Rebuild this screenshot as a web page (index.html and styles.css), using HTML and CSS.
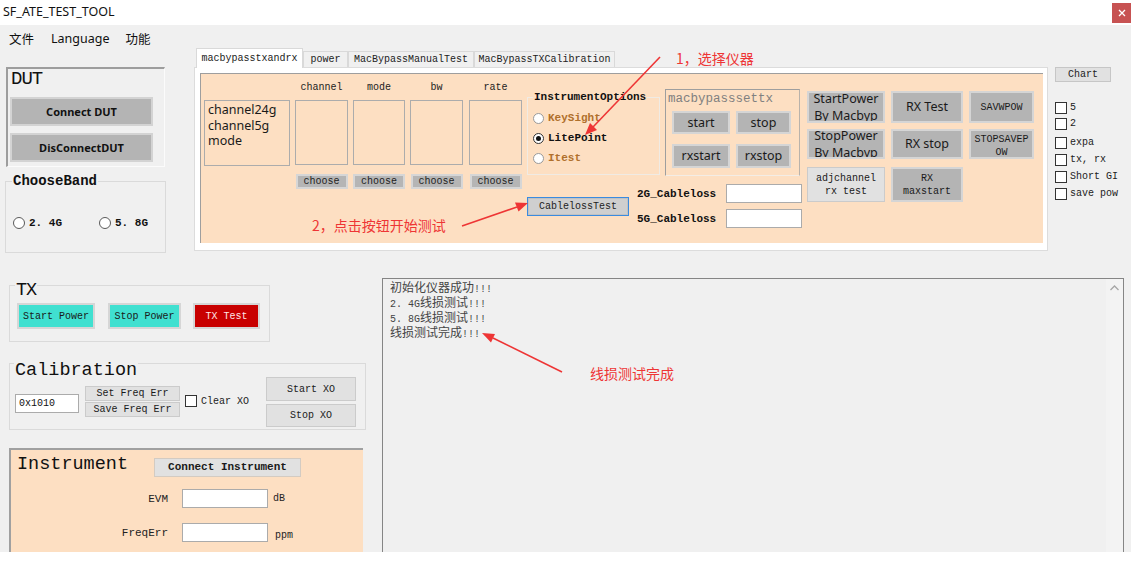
FILE: index.html
```html
<!DOCTYPE html>
<html lang="zh">
<head>
<meta charset="utf-8">
<title>SF_ATE_TEST_TOOL</title>
<link rel="stylesheet" href="styles.css">
</head>
<body>
<div class="app">
  <header class="titlebar">
    <span class="title">SF_ATE_TEST_TOOL</span>
    <span class="close"><svg width="8" height="8" viewBox="0 0 8 8"><path d="M1 1L7 7M7 1L1 7" stroke="#fff" stroke-width="1.3"/></svg></span>
  </header>
  <div class="window">
    <nav class="menubar"><span class="m1">文件</span><span class="m2">Language</span><span>功能</span></nav>
    <div class="top">
      <div class="leftcol">
        <section class="dut">
          <div class="dut-title">DUT</div>
          <div class="dut-btn first">Connect DUT</div>
          <div class="dut-btn">DisConnectDUT</div>
        </section>
        <section class="band">
          <div class="band-title">ChooseBand</div>
          <div class="band-row">
            <div class="radio-item band-item"><span class="radio"></span><span class="rlabel">2. 4G</span></div>
            <div class="radio-item"><span class="radio"></span><span class="rlabel">5. 8G</span></div>
          </div>
        </section>
      </div>
      <div class="tabs">
        <div class="tabstrip">
          <div class="tab active w1">macbypasstxandrx</div>
          <div class="tab w2">power</div>
          <div class="tab w3">MacBypassManualTest</div>
          <div class="tab w4">MacBypassTXCalibration</div>
        </div>
        <div class="tabpage">
          <div class="peach">
            <div class="lb-main">channel24g<br>channel5g<br>mode</div>
            <div class="col c53"><div class="col-label">channel</div><div class="col-box"></div><div class="choose">choose</div></div>
            <div class="col c52"><div class="col-label">mode</div><div class="col-box"></div><div class="choose">choose</div></div>
            <div class="col c53"><div class="col-label">bw</div><div class="col-box"></div><div class="choose">choose</div></div>
            <div class="col c53 last"><div class="col-label">rate</div><div class="col-box"></div><div class="choose">choose</div></div>
            <div class="fg">
              <div class="fg-top">
                <div class="instopt">
                  <div class="io-title">InstrumentOptions</div>
                  <div class="io-row first brown"><span class="radio light"></span><span class="io-label">KeySight</span></div>
                  <div class="io-row"><span class="radio checked"></span><span class="io-label">LitePoint</span></div>
                  <div class="io-row brown"><span class="radio light"></span><span class="io-label">Itest</span></div>
                </div>
                <div class="macset">
                  <div class="ms-title">macbypasssettx</div>
                  <div class="ms-grid">
                    <div class="gbtn ui">start</div>
                    <div class="gbtn ui">stop</div>
                    <div class="gbtn ui">rxstart</div>
                    <div class="gbtn ui">rxstop</div>
                  </div>
                </div>
              </div>
              <div class="fg-bottom">
                <div class="cabletest">CablelossTest</div>
                <div class="cablegrid">
                  <span class="cl-label">2G_Cableloss</span><span class="input"></span>
                  <span class="cl-label">5G_Cableloss</span><span class="input"></span>
                </div>
              </div>
            </div>
            <div class="hgrid">
              <div class="gbtn ui two">StartPower<br>By Macbyp</div>
              <div class="gbtn ui">RX Test</div>
              <div class="gbtn">SAVWPOW</div>
              <div class="gbtn ui two">StopPower<br>By Macbyp</div>
              <div class="gbtn ui">RX stop</div>
              <div class="gbtn brk">STOPSAVEPOW</div>
              <div class="lbtn r3 lines">adjchannel<br>rx test</div>
              <div class="gbtn r3 lines">RX<br>maxstart</div>
            </div>
          </div>
        </div>
      </div>
      <div class="rightcol">
        <div class="chart">Chart</div>
        <div class="cblist">
          <div class="cb h16"><span class="checkbox"></span><span>5</span></div>
          <div class="cb h19"><span class="checkbox"></span><span>2</span></div>
          <div class="cb"><span class="checkbox"></span><span>expa</span></div>
          <div class="cb"><span class="checkbox"></span><span>tx, rx</span></div>
          <div class="cb"><span class="checkbox"></span><span>Short GI</span></div>
          <div class="cb"><span class="checkbox"></span><span>save pow</span></div>
        </div>
      </div>
    </div>
    <div class="bottom">
      <div class="leftb">
        <section class="tx">
          <div class="gtitle tx-title">TX</div>
          <div class="tx-row">
            <div class="cbtn cyan wa">Start Power</div>
            <div class="cbtn cyan wb">Stop Power</div>
            <div class="cbtn red wc">TX Test</div>
          </div>
        </section>
        <section class="calib">
          <div class="gtitle cal-title">Calibration</div>
          <div class="cal-row">
            <div class="input cal-input">0x1010</div>
            <div class="freq-col">
              <div class="lbtn fbtn">Set Freq Err</div>
              <div class="lbtn fbtn">Save Freq Err</div>
            </div>
            <div class="clear-xo"><span class="checkbox"></span><span>Clear XO</span></div>
            <div class="xo-col">
              <div class="lbtn xo1">Start XO</div>
              <div class="lbtn xo2">Stop XO</div>
            </div>
          </div>
        </section>
        <section class="instr">
          <div class="instr-top">
            <div class="instr-title">Instrument</div>
            <div class="lbtn conn">Connect Instrument</div>
          </div>
          <div class="instr-row evm"><span class="ilabel">EVM</span><span class="input iin"></span><span class="unit">dB</span></div>
          <div class="instr-row ferr"><span class="ilabel">FreqErr</span><span class="input iin"></span><span class="unit ppm">ppm</span></div>
        </section>
      </div>
      <div class="log">
        <div class="log-text">
          <div>初始化仪器成功<span class="mono">!!!</span></div>
          <div><span class="mono">2. 4G</span>线损测试<span class="mono">!!!</span></div>
          <div><span class="mono">5. 8G</span>线损测试<span class="mono">!!!</span></div>
          <div>线损测试完成<span class="mono">!!!</span></div>
        </div>
        <div class="scroll"><svg width="17" height="10" viewBox="0 0 17 10"><polyline points="4.5,7 8.5,3 12.5,7" fill="none" stroke="#a6a6a6" stroke-width="1.3"/></svg></div>
      </div>
    </div>
  </div>
  <svg class="arrows" width="1136" height="563" viewBox="0 0 1136 563">
    <g fill="#ee3535" stroke="#ee3535">
      <line x1="660" y1="57" x2="593" y2="127" stroke-width="1.6"/>
      <polygon points="585,135 597,130 590,123" stroke="none"/>
      <line x1="462" y1="226" x2="517" y2="207" stroke-width="1.6"/>
      <polygon points="528,203 518.5,211.5 515,202.5" stroke="none"/>
      <line x1="562" y1="372" x2="493" y2="338" stroke-width="1.6"/>
      <polygon points="482,333 495,334 491,342.5" stroke="none"/>
    </g>
  </svg>
  <span class="note n1">1，选择仪器</span>
  <span class="note n2">2，点击按钮开始测试</span>
  <span class="note n3">线损测试完成</span>
</div>
</body>
</html>
```

FILE: styles.css
```css
* { box-sizing: border-box; margin: 0; padding: 0; }
html, body { background: #fff; }
body {
  width: 1136px; height: 563px; overflow: hidden;
  font-family: "Liberation Mono", "DejaVu Sans Mono", monospace;
  font-size: 10px; color: #1a1a1a;
}
.app { position: relative; width: 1136px; height: 563px; }
.ui { font-family: "Noto Sans", "Noto Sans CJK SC", sans-serif; }
.mono { font-family: "Liberation Mono", monospace; font-size: 10px; }

/* title bar */
.titlebar { height: 25px; display: flex; align-items: flex-start; justify-content: space-between; padding: 0 5px 0 3px; background: #fff; }
.title { font-family: "Noto Sans", "Noto Sans CJK SC", sans-serif; font-size: 12.5px; line-height: 24px; color: #111; }
.close { margin-top: 3px; width: 19px; height: 20px; background: #c75252; display: flex; align-items: center; justify-content: center; }

.window { width: 1131px; height: 527px; background: #f0f0f0; overflow: hidden; }
.menubar { height: 23px; display: flex; align-items: center; padding: 3px 0 0 9px; font-family: "Noto Sans", "Noto Sans CJK SC", sans-serif; font-size: 12.5px; color: #111; }
.menubar .m1 { margin-right: 17px; }
.menubar .m2 { margin-right: 16px; }

.top { display: flex; height: 205px; }

/* left column */
.leftcol { width: 194px; flex: none; }
.dut {
  margin: 19px 0 0 6px; width: 159px; height: 100px;
  border-top: 2px solid #9d9d9d; border-left: 2px solid #9d9d9d;
  border-right: 1px solid #fbfbfb; border-bottom: 1px solid #fbfbfb;
}
.dut-title { font-size: 19px; line-height: 20px; padding-left: 3px; letter-spacing: -1px; color: #111; }
.dut-btn {
  margin: 7px 0 0 2px; width: 143px; height: 29px;
  background: #b4b4b4; border: 2px solid #d3d3d3;
  display: flex; align-items: center; justify-content: center;
  font-family: "Noto Sans", sans-serif; font-weight: bold; font-size: 11px; color: #111;
}
.dut-btn.first { margin-top: 8px; }

.band { margin: 14px 0 0 5px; width: 161px; height: 72px; border: 1px solid #dadada; }
.band-title {
  width: fit-content; margin: -9px 0 0 6px; padding: 0 1px; background: #f0f0f0;
  font-weight: bold; font-size: 14px; line-height: 16px; color: #111;
}
.band-row { display: flex; align-items: center; margin: 27px 0 0 7px; height: 14px; }
.radio-item { display: flex; align-items: center; }
.band-item { width: 86px; }
.rlabel { margin-left: 4px; font-weight: bold; font-size: 11px; color: #111; }
.radio {
  width: 12px; height: 12px; border: 1px solid #5a5a5a; border-radius: 50%; background: #fff; flex: none;
  display: inline-flex; align-items: center; justify-content: center;
}
.radio.light { border-color: #9a9a9a; width: 11px; height: 11px; }
.radio.checked { width: 11px; height: 11px; border-color: #333; }
.radio.checked::after { content: ""; width: 5px; height: 5px; border-radius: 50%; background: #111; }

/* tabs */
.tabs { width: 854px; flex: none; }
.tabstrip { height: 19px; display: flex; align-items: flex-end; padding-left: 2px; }
.tab {
  height: 16px; line-height: 15px; text-align: center;
  border: 1px solid #d9d9d9; border-bottom: none; background: #f0f0f0; color: #222;
}
.tab.active { position: relative; z-index: 1; height: 20px; margin-bottom: -1px; line-height: 19px; background: #fff; }
.w1 { width: 107px; }
.w2 { width: 45px; }
.w3 { width: 126px; }
.w4 { width: 141px; }
.tabpage { height: 184px; background: #fff; border: 1px solid #dcdcdc; padding: 5px 4px 7px 5px; }
.peach {
  height: 170px; background: #fddfc2;
  border-top: 1px solid #9e9e9e; border-left: 1px solid #9e9e9e;
  display: flex; align-items: flex-start;
}
.lb-main {
  margin: 26px 0 0 3px; width: 86px; height: 66px; flex: none;
  border: 1px solid #acacac; padding: 1px 3px;
  font-family: "Noto Sans", sans-serif; font-size: 12.5px; line-height: 15.5px; color: #1a1a1a;
}
.col { display: flex; flex-direction: column; align-items: center; margin-left: 5px; flex: none; }
.col.last { margin-left: 6px; }
.c53 { width: 53px; }
.c52 { width: 52px; }
.col-label { height: 26px; padding-top: 8px; line-height: 12px; color: #222; }
.col-box { width: 100%; height: 65px; border: 1px solid #acacac; }
.choose {
  margin-top: 9px; width: 52px; height: 15px; line-height: 11px; text-align: center;
  background: #b5b5b5; border: 2px solid #d6d6d6; color: #222;
}

.fg { margin-left: 5px; width: 275px; flex: none; }
.fg-top { display: flex; align-items: flex-start; margin-top: 15px; height: 87px; }
.instopt { margin-top: 8px; width: 133px; height: 78px; border: 1px solid #f0ebe4; flex: none; }
.io-title {
  width: fit-content; margin: -7px 0 0 5px; padding: 0 1px; background: #fddfc2;
  font-weight: bold; font-size: 11px; line-height: 12px; color: #111;
}
.io-row { display: flex; align-items: center; height: 20px; padding-left: 5px; font-weight: bold; font-size: 11px; color: #111; }
.io-row.first { margin-top: 5px; }
.io-row.brown { color: #b0702c; }
.io-label { margin-left: 4px; }
.macset {
  margin-left: 5px; width: 135px; height: 87px; flex: none;
  border-top: 1px solid #9e9e9e; border-left: 1px solid #9e9e9e;
  border-right: 1px solid #b9b2aa; border-bottom: 1px solid #f3ede6;
}
.ms-title { margin-top: 1px; padding-left: 2px; font-size: 12.5px; line-height: 16px; color: #808080; }
.ms-grid { display: grid; grid-template-columns: 58px 55px; grid-template-rows: 23px 24px; column-gap: 6px; row-gap: 10px; margin: 4px 0 0 6px; }
.gbtn {
  background: #b4b4b4; border: 2px solid #d5d5d5; color: #1a1a1a;
  display: flex; align-items: center; justify-content: center; text-align: center; overflow: hidden;
  font-size: 10px; line-height: 13px;
}
.gbtn.ui { font-size: 12.5px; line-height: 16px; }
.gbtn.two { line-height: 17px; }
.gbtn.brk { word-break: break-all; align-items: flex-start; padding: 2px 3px 0; }
.lbtn {
  background: #e1e1e1; border: 1px solid #cbcbcb; color: #1a1a1a;
  display: flex; align-items: center; justify-content: center; text-align: center;
  font-size: 10px; line-height: 13px;
}
.fg-bottom { display: flex; align-items: flex-start; }
.cabletest {
  margin-top: 21px; width: 102px; height: 19px; flex: none;
  background: #cfcfcf; border: 1px solid #3a8be0; box-shadow: inset 0 0 0 1px #c2c2c2;
  display: flex; align-items: center; justify-content: center; color: #222;
}
.cablegrid { margin: 8px 0 0 8px; display: grid; grid-template-columns: 89px 76px; grid-auto-rows: 19px; row-gap: 6px; align-items: center; }
.cl-label { font-weight: bold; font-size: 11px; color: #111; }
.input { display: block; height: 19px; background: #fff; border: 1px solid #ababab; }

.hgrid {
  margin: 17px 0 0 5px; flex: none;
  display: grid; grid-template-columns: 78px 72px 65px; grid-template-rows: 32px 30px 37px;
  column-gap: 6px; row-gap: 6px;
}
.r3 { align-self: end; height: 35px; }

/* right column */
.rightcol { margin-left: 7px; padding-top: 19px; flex: none; width: 76px; }
.chart {
  width: 56px; height: 15px; background: #e1e1e1; border: 1px solid #c6c6c6;
  display: flex; align-items: center; justify-content: center; color: #222;
}
.cblist { margin-top: 20px; }
.cb { display: flex; align-items: flex-start; height: 17px; color: #222; line-height: 12px; }
.cb.h16 { height: 16px; }
.cb.h19 { height: 19px; }
.cb .checkbox { margin-right: 3px; }
.checkbox { display: inline-block; width: 12px; height: 12px; border: 1px solid #333; background: #fff; flex: none; }

/* bottom */
.bottom { display: flex; }
.leftb { width: 382px; flex: none; }
.gtitle { width: fit-content; background: #f0f0f0; font-size: 18.5px; line-height: 20px; padding: 0 1px; color: #111; }
.tx { margin: 32px 0 0 9px; width: 261px; height: 57px; border: 1px solid #dadada; }
.tx-title { margin: -5px 0 0 5px; letter-spacing: -1px; }
.tx-row { display: flex; margin: 2px 0 0 7px; }
.cbtn {
  height: 26px; border: 2px solid #d6d6d6; display: flex; align-items: center; justify-content: center;
  color: #1a1a1a;
}
.cyan { background: #40e0d0; }
.red { background: #c80000; color: #ffe6e6; }
.wa { width: 78px; }
.wb { width: 73px; margin-left: 13px; }
.wc { width: 67px; margin-left: 12px; }

.calib { margin: 21px 0 0 9px; width: 357px; height: 67px; border: 1px solid #dadada; }
.cal-title { margin: -3px 0 -12px 4px; height: 20px; }
.cal-row { display: flex; align-items: flex-start; margin-left: 5px; }
.cal-input { margin-top: 25px; width: 64px; padding-left: 3px; line-height: 17px; color: #111; }
.freq-col { margin: 17px 0 0 6px; display: flex; flex-direction: column; gap: 1px; }
.fbtn { width: 95px; height: 15px; line-height: 12px; }
.clear-xo { margin: 26px 0 0 5px; display: flex; align-items: center; height: 12px; width: 64px; color: #222; }
.clear-xo .checkbox { margin-right: 4px; }
.xo-col { margin: 8px 0 0 17px; display: flex; flex-direction: column; gap: 3px; }
.xo1 { width: 90px; height: 24px; }
.xo2 { width: 90px; height: 23px; }

.instr {
  margin: 18px 0 0 9px; width: 354px; height: 120px; background: #fddfc2;
  border-top: 2px solid #a0a0a0; border-left: 2px solid #a0a0a0;
}
.instr-top { display: flex; align-items: flex-start; }
.instr-title { width: 143px; margin-top: 5px; padding-left: 6px; font-size: 18.5px; line-height: 20px; color: #111; }
.conn { margin-top: 8px; width: 147px; height: 19px; font-weight: bold; font-size: 11px; border-color: #d3cbc2; }
.instr-row { display: flex; align-items: center; }
.instr-row.evm { margin-top: 12px; }
.instr-row.ferr { margin-top: 15px; }
.ilabel { width: 157px; text-align: right; font-size: 11px; color: #222; }
.iin { width: 86px; margin-left: 14px; }
.unit { margin-left: 5px; color: #222; }
.unit.ppm { margin-left: 7px; margin-top: 6px; }

.log { margin-top: 25px; width: 742px; height: 300px; border: 1px solid #858585; background: #f0f0f0; display: flex; }
.log-text {
  flex: 1; padding: 2px 0 0 7px;
  font-family: "Noto Sans CJK SC", sans-serif; font-size: 12px; line-height: 12px; color: #444;
}
.scroll { width: 17px; background: #f3f3f3; padding-top: 4px; }
.scroll svg { display: block; }

/* annotations (overlay) */
.arrows { position: absolute; left: 0; top: 0; pointer-events: none; }
.note {
  position: absolute; font-family: "Noto Sans CJK SC", sans-serif; font-size: 14px; line-height: 20px;
  color: #ee3535; white-space: nowrap;
}
.n1 { left: 676px; top: 48px; }
.n2 { left: 312px; top: 215px; }
.n3 { left: 590px; top: 363px; }
```
